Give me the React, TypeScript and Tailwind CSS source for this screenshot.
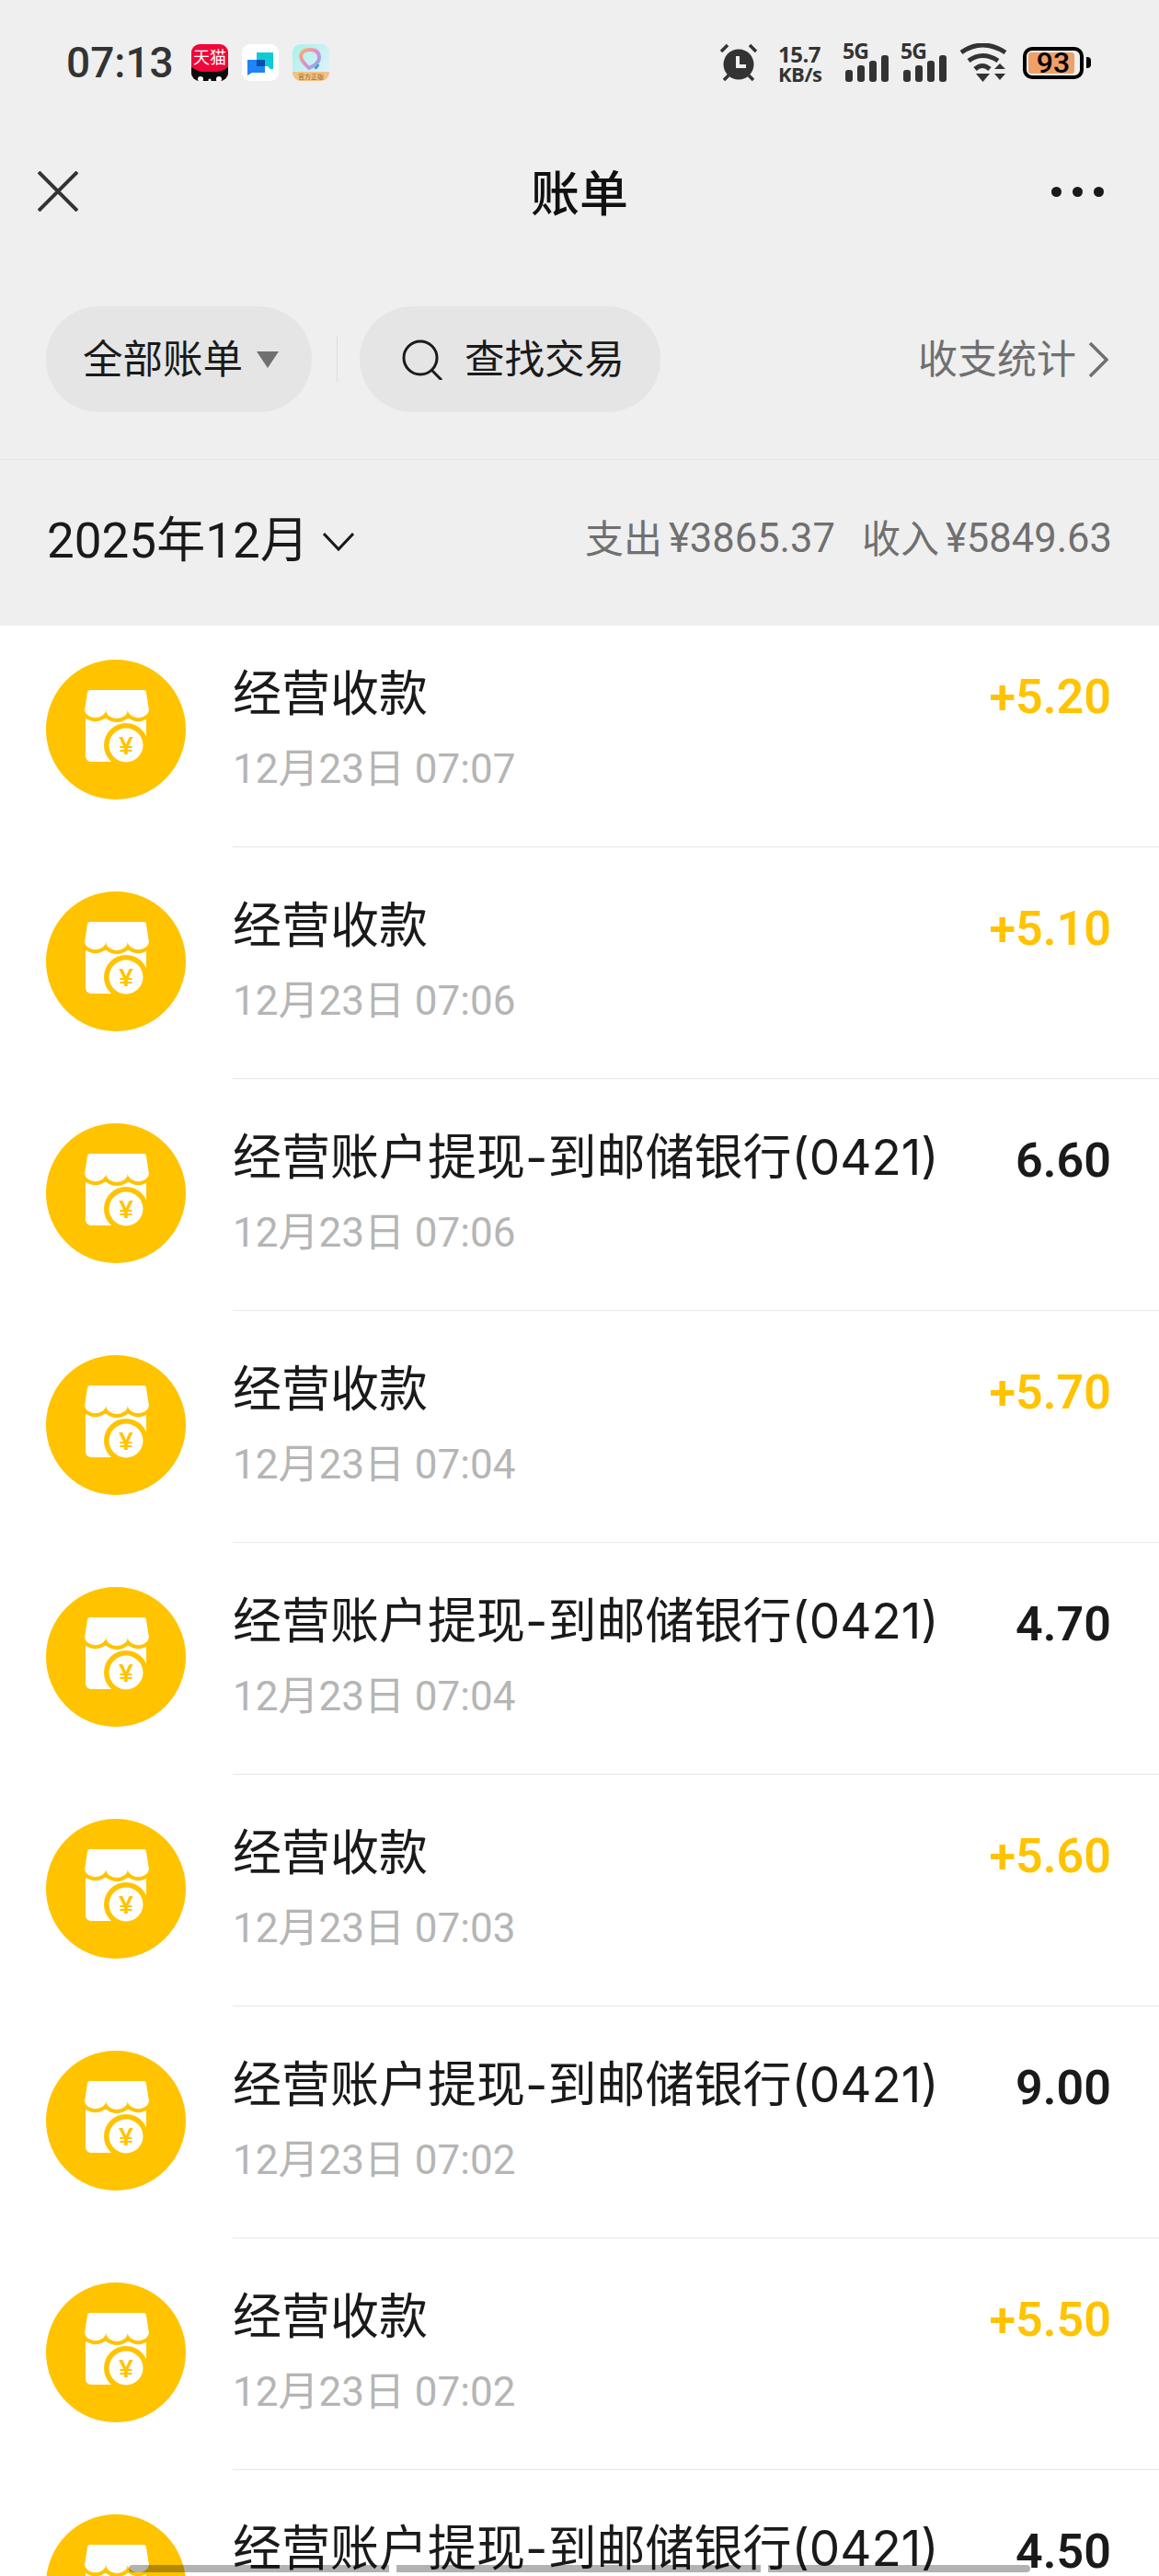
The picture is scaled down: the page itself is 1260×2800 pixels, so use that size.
const font = "font-['Roboto','Noto_Sans_CJK_SC',sans-serif]";

const rows = [
  { title: '经营收款', time: '12月23日 07:07', amount: '+5.20', income: true },
  { title: '经营收款', time: '12月23日 07:06', amount: '+5.10', income: true },
  { title: '经营账户提现-到邮储银行(0421)', time: '12月23日 07:06', amount: '6.60', income: false },
  { title: '经营收款', time: '12月23日 07:04', amount: '+5.70', income: true },
  { title: '经营账户提现-到邮储银行(0421)', time: '12月23日 07:04', amount: '4.70', income: false },
  { title: '经营收款', time: '12月23日 07:03', amount: '+5.60', income: true },
  { title: '经营账户提现-到邮储银行(0421)', time: '12月23日 07:02', amount: '9.00', income: false },
  { title: '经营收款', time: '12月23日 07:02', amount: '+5.50', income: true },
  { title: '经营账户提现-到邮储银行(0421)', time: '12月23日 07:01', amount: '4.50', income: false },
];

const awning = 'M46 33H106a3 3 0 0 1 3 3l3 19a11.7 9 0 0 1-23.3 0a11.7 9 0 0 1-23.4 0a11.7 9 0 0 1-23.300 0l3-19a3 3 0 0 1 3-3Z';

function ShopIcon() {
  return (
    <svg viewBox="0 0 152 152" className="w-[152px] h-[152px] shrink-0">
      <circle cx="76" cy="76" r="76" fill="#ffc300" />
      <path d="M43 56H109V90H80V111H49a6 6 0 0 1-6-6Z" fill="#fff" />
      <path d={awning} fill="#ffc300" stroke="#ffc300" strokeWidth="8" />
      <path d={awning} fill="#fff" />
      <circle cx="87" cy="93" r="24" fill="#ffc300" />
      <circle cx="87" cy="93" r="18.5" fill="#fff" />
      <text x="87" y="103" textAnchor="middle" fontSize="28" fontWeight="700" fill="#ffc300" fontFamily="Liberation Sans">¥</text>
    </svg>
  );
}

function Bars() {
  return (
    <svg viewBox="0 0 47 29" className="w-[47px] h-[29px] block">
      <rect x="0" y="16" width="8" height="13" rx="3" fill="#333" />
      <rect x="13" y="11" width="8" height="18" rx="3" fill="#333" />
      <rect x="26" y="6" width="8" height="23" rx="3" fill="#333" />
      <rect x="39" y="0" width="8" height="29" rx="3" fill="#333" />
    </svg>
  );
}

function Signal() {
  return (
    <div className="w-[50px] h-[42px] relative">
      <span className="absolute left-0 top-[-4px] text-[23px] leading-[24px] font-bold text-[#333] font-['Open_Sans',sans-serif] tracking-[-1px]">5G</span>
      <div className="absolute left-[3px] bottom-0">
        <Bars />
      </div>
    </div>
  );
}

function StatusBar() {
  return (
    <div className="h-[136px] flex items-center pl-[72px] pr-[74px]">
      <span className="text-[46px] leading-none font-medium text-[#333] w-[136px] font-['Roboto',sans-serif]">07:13</span>

      {/* notification icons */}
      <div className="flex gap-[15px]">
        <div className="w-[40px] h-[40px] rounded-[9px] bg-[#f0063a] overflow-hidden relative">
          <span className="absolute left-0 right-0 top-[2px] text-center text-[18px] leading-[22px] text-white font-['Noto_Sans_CJK_SC',sans-serif]">天猫</span>
          <svg viewBox="0 0 40 16" className="absolute left-0 bottom-0 w-[40px] h-[16px]">
            <path d="M0 16V1q8 5 12 5h16q4 0 12-5v15Z" fill="#0a0a0a" />
            <circle cx="10" cy="14" r="3" fill="#fff" />
            <circle cx="30" cy="14" r="3" fill="#fff" />
            <circle cx="20" cy="15" r="1.500" fill="#fff" />
          </svg>
        </div>
        <div className="w-[40px] h-[40px] rounded-[9px] bg-white flex items-center justify-center">
          <svg viewBox="0 0 40 40" className="w-[40px] h-[40px]">
            <path d="M16 9h18v18h-3l-3-3H16Z" fill="#12c9d8" />
            <path d="M6 17h19v14H11l-5 3Z" fill="#1f84f7" />
            <rect x="16" y="17" width="9" height="7" fill="#0b4fa8" />
          </svg>
        </div>
        <div className="w-[40px] h-[40px] rounded-[9px] bg-gradient-to-br from-[#a8f0e8] to-[#e6f2ff] overflow-hidden relative">
          <svg viewBox="0 0 40 40" className="w-[40px] h-[40px]">
            <defs>
              <linearGradient id="heartGrad" x1="0" y1="0" x2="1" y2="1">
                <stop offset="0" stopColor="#f7b267" />
                <stop offset="0.5" stopColor="#e58ad0" />
                <stop offset="1" stopColor="#6fb8f2" />
              </linearGradient>
            </defs>
            <path d="M19 6q-9 0-10 7q0 5 9 13q11-5 11-11q0-9-10-9Z" fill="none" stroke="url(#heartGrad)" strokeWidth="4" />
            <path d="M24 26q3 0 4-4" fill="none" stroke="#3a9ad8" strokeWidth="2.500" />
          </svg>
          <span className="absolute left-0 right-0 bottom-0 h-[10px] bg-[#f2c283] text-center text-[7px] leading-[10px] text-[#9a6a2a] font-['Noto_Sans_CJK_SC',sans-serif]">官方正版</span>
        </div>
      </div>

      <div className="ml-auto flex items-center">
        {/* alarm */}
        <svg viewBox="0 0 42 42" className="w-[42px] h-[42px]">
          <circle cx="21" cy="23" r="16.500" fill="#333" />
          <path d="M2 9l7-7M40 9l-7-7M5 40l5-5M37 40l-5-5" stroke="#333" strokeWidth="3.500" fill="none" />
          <path d="M20 14v11h9" stroke="#efefef" strokeWidth="4" fill="none" />
        </svg>
        <div className="ml-[22px] w-[50px] flex flex-col text-[#333] font-bold font-['Open_Sans',sans-serif]">
          <span className="text-[24px] leading-[24px] tracking-[-0.5px]">15.7</span>
          <span className="text-[22px] leading-[18px] tracking-[-0.5px] whitespace-nowrap">KB/s</span>
        </div>
        <div className="ml-[20px]">
          <Signal />
        </div>
        <div className="ml-[13px]">
          <Signal />
        </div>
        {/* wifi */}
        <svg viewBox="0 0 52 42" className="ml-[14px] w-[52px] h-[42px]">
          <path d="M2 10Q25-6 50 10" fill="none" stroke="#333" strokeWidth="5" />
          <path d="M10 19Q25 8 42 19" fill="none" stroke="#333" strokeWidth="5" />
          <path d="M17 28Q25 21 33 28" fill="none" stroke="#333" strokeWidth="5" />
          <path d="M18 33h15l-7.500 9Z" fill="#333" />
          <path d="M38 28l6-6l6 6ZM38 33h12l-6 7Z" fill="#333" />
        </svg>
        <div className="ml-[17px] flex items-center">
          <div className="w-[66px] h-[35px] border-[4px] border-black rounded-[10px] p-[2px] relative">
            <div className="h-full rounded-[3px] bg-[#ef9f68] w-[93%]" />
            <span className="absolute inset-0 flex items-center justify-center text-[32px] font-medium text-black leading-none font-['Roboto',sans-serif]">93</span>
          </div>
          <div className="ml-[3px] w-[5px] h-[12px] bg-black rounded-r-[4px]" />
        </div>
      </div>
    </div>
  );
}

function Header() {
  return (
    <div className="bg-[#efefef]">
      <StatusBar />
      <div className="h-[144px] flex items-center justify-between pl-[41px] pr-[60px] relative">
        <svg viewBox="0 0 44 44" className="w-[44px] h-[44px]">
          <path d="M1 1L43 43M43 1L1 43" stroke="#333" strokeWidth="4" fill="none" />
        </svg>
        <span className="absolute left-0 right-0 text-center text-[53px] font-medium text-[#111] font-['Noto_Sans_CJK_SC',sans-serif]">账单</span>
        <div className="flex gap-[12px]">
          <span className="w-[11px] h-[11px] rounded-full bg-[#1a1a1a]" />
          <span className="w-[11px] h-[11px] rounded-full bg-[#1a1a1a]" />
          <span className="w-[11px] h-[11px] rounded-full bg-[#1a1a1a]" />
        </div>
      </div>

      <div className="pt-[53px] pb-[51px] pl-[50px] pr-[55px] flex items-center border-b border-[#e6e6e6] h-[220px]">
        <div className="w-[289px] h-[115px] rounded-full bg-[#e5e5e5] flex items-center pl-[40px]">
          <span className="text-[43.5px] pb-[6px] text-[#1a1a1a] font-['Noto_Sans_CJK_SC',sans-serif]">全部账单</span>
          <svg viewBox="0 0 24 18" className="ml-[15px] w-[24px] h-[18px]">
            <path d="M0 0h24L12 18Z" fill="#707070" />
          </svg>
        </div>
        <div className="ml-[27px] w-px h-[49px] bg-[#dcdcdc]" />
        <div className="ml-[24px] w-[327px] h-[115px] rounded-full bg-[#e5e5e5] flex items-center pl-[46px]">
          <svg viewBox="0 0 44 44" className="w-[44px] h-[44px]">
            <circle cx="20" cy="20" r="18" fill="none" stroke="#1a1a1a" strokeWidth="3" />
            <path d="M32 33l11 11" stroke="#1a1a1a" strokeWidth="3" fill="none" />
          </svg>
          <span className="ml-[24px] pb-[6px] text-[43.5px] text-[#1a1a1a] font-['Noto_Sans_CJK_SC',sans-serif]">查找交易</span>
        </div>
        <div className="ml-auto flex items-center text-[#707070]">
          <span className="text-[43px] pb-[6px] font-['Noto_Sans_CJK_SC',sans-serif]">收支统计</span>
          <svg viewBox="0 0 22 44" className="ml-[13px] w-[22px] h-[44px]">
            <path d="M2 4l18 18l-18 18" stroke="#707070" strokeWidth="3.500" fill="none" />
          </svg>
        </div>
      </div>

      <div className={`h-[180px] flex items-center pl-[51px] pr-[51px] pb-[3px] ${font}`}>
        <span className="text-[53px] text-[#1a1a1a]">2025年12月</span>
        <svg viewBox="0 0 34 22" className="ml-[15px] w-[34px] h-[22px]">
          <path d="M1 2l16 17l16-17" stroke="#1a1a1a" strokeWidth="3" fill="none" />
        </svg>
        <div className="ml-auto flex items-center gap-[7px] pb-[5px] text-[#707070]">
          <span className="text-[42px]">支出</span>
          <span className="text-[43.5px]">¥3865.37</span>
        </div>
        <div className="ml-[29px] flex items-center gap-[7px] pb-[5px] text-[#707070]">
          <span className="text-[42px]">收入</span>
          <span className="text-[43.5px]">¥5849.63</span>
        </div>
      </div>
    </div>
  );
}

function Row({ row }: { row: (typeof rows)[number] }) {
  return (
    <div className="flex pl-[50px]">
      <div className="pt-[48px] pr-[51px]">
        <ShopIcon />
      </div>
      <div className={`flex-1 h-[252px] border-b border-[#e8e8e8] pr-[52px] pt-[49px] ${font}`}>
        <div className="flex justify-between items-center h-[72px]">
          <span className="text-[53px] leading-[72px] text-[#1a1a1a] font-['Inter','Noto_Sans_CJK_SC',sans-serif]">{row.title}</span>
          <span className={`mt-[8px] text-[52px] leading-[72px] font-semibold ${row.income ? 'text-[#ffc300]' : 'text-[#1a1a1a]'}`}>
            {row.amount}
          </span>
        </div>
        <div className="mt-[16px] text-[44px] leading-[60px] text-[#b5b5b5]">{row.time}</div>
      </div>
    </div>
  );
}

export default function App() {
  return (
    <div className="w-[1260px] h-[2800px] bg-white overflow-hidden relative">
      <Header />
      <div className="-mt-[11px]">
        {rows.map((row, i) => (
          <Row key={i} row={row} />
        ))}
      </div>
      <div className="absolute left-[140px] top-[2788px] flex gap-[8px]">
        <div className="w-[283px] h-[8px] bg-black/30 rounded-l-full" />
        <div className="w-[396px] h-[8px] bg-black/30" />
        <div className="w-[285px] h-[8px] bg-black/30 rounded-r-full" />
      </div>
    </div>
  );
}
